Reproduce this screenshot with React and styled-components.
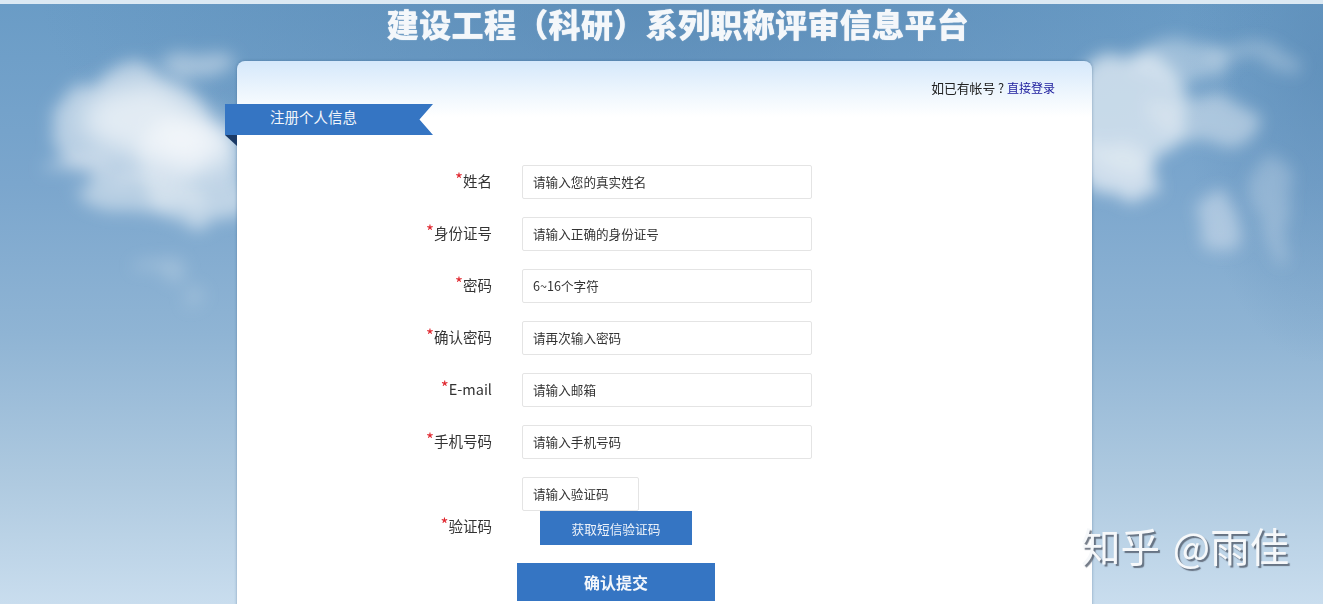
import React from 'react'
import styled, { createGlobalStyle } from 'styled-components'

const FONT = `"Noto Sans CJK SC", "Liberation Sans", sans-serif`

const GlobalStyle = createGlobalStyle`
  html, body {
    margin: 0;
    padding: 0;
    overflow: hidden;
  }
  body {
    font-family: ${FONT};
    color: #333;
  }
`

const fields = [
  { name: 'name', label: '姓名', hint: '请输入您的真实姓名' },
  { name: 'idcard', label: '身份证号', hint: '请输入正确的身份证号' },
  { name: 'password', label: '密码', hint: '6~16个字符' },
  { name: 'confirm', label: '确认密码', hint: '请再次输入密码' },
  { name: 'email', label: 'E-mail', hint: '请输入邮箱' },
  { name: 'mobile', label: '手机号码', hint: '请输入手机号码' },
]

const Clouds = () => (
  <Sky viewBox="0 0 1323 604" preserveAspectRatio="none" aria-hidden="true">
    <defs>
      <filter id="haze" x="-40%" y="-40%" width="180%" height="180%">
        <feTurbulence type="fractalNoise" baseFrequency="0.018" numOctaves="5" seed="11" />
        <feDisplacementMap in="SourceGraphic" scale="46" />
        <feGaussianBlur stdDeviation="8" />
      </filter>
      <filter id="core" x="-40%" y="-40%" width="180%" height="180%">
        <feTurbulence type="fractalNoise" baseFrequency="0.03" numOctaves="4" seed="5" />
        <feDisplacementMap in="SourceGraphic" scale="30" />
        <feGaussianBlur stdDeviation="13" />
      </filter>
    </defs>
    {/* left cloud */}
    <g filter="url(#haze)" fill="#dfe9f2">
      <ellipse cx="130" cy="128" rx="80" ry="56" opacity="0.62" />
      <ellipse cx="195" cy="175" rx="52" ry="50" opacity="0.68" />
      <ellipse cx="140" cy="195" rx="60" ry="20" opacity="0.6" />
      <ellipse cx="75" cy="165" rx="36" ry="9" opacity="0.45" />
      <ellipse cx="200" cy="64" rx="38" ry="12" opacity="0.5" />
      <ellipse cx="160" cy="268" rx="26" ry="9" opacity="0.28" />
      <ellipse cx="192" cy="296" rx="14" ry="9" opacity="0.2" />
    </g>
    <g filter="url(#core)" fill="#f5f8fb">
      <ellipse cx="140" cy="118" rx="56" ry="36" opacity="0.7" />
      <ellipse cx="195" cy="145" rx="42" ry="28" opacity="0.8" />
    </g>
    {/* right cloud */}
    <g filter="url(#haze)" fill="#dde8f1">
      <ellipse cx="1130" cy="110" rx="56" ry="62" opacity="0.8" />
      <ellipse cx="1112" cy="165" rx="38" ry="22" opacity="0.85" />
      <ellipse cx="1180" cy="62" rx="52" ry="22" opacity="0.45" />
      <ellipse cx="1205" cy="118" rx="52" ry="22" opacity="0.55" />
      <ellipse cx="1250" cy="56" rx="42" ry="12" opacity="0.34" />
      <ellipse cx="1218" cy="222" rx="24" ry="30" opacity="0.5" />
      <ellipse cx="1276" cy="208" rx="20" ry="50" opacity="0.3" />
    </g>
  </Sky>
)

const App = () => {
  return (
    <Page>
      <GlobalStyle />
      <Clouds />
      <Content>
        <Title>建设工程（科研）系列职称评审信息平台</Title>
        <Card>
          <LoginHint>
            如已有帐号 ? <LoginLink href="#">直接登录</LoginLink>
          </LoginHint>
          <RibbonWrap>
            <Ribbon>注册个人信息</Ribbon>
          </RibbonWrap>
          <Form>
            {fields.map((f) => (
              <Row key={f.name}>
                <Label>
                  <Star>*</Star>
                  {f.label}
                </Label>
                <Input placeholder={f.hint} />
              </Row>
            ))}
            <CodeRow>
              <Label>
                <Star>*</Star>验证码
              </Label>
              <CodeField>
                <Input $short placeholder="请输入验证码" />
                <SmsButton type="button">获取短信验证码</SmsButton>
              </CodeField>
            </CodeRow>
            <Submit type="button">确认提交</Submit>
          </Form>
        </Card>
      </Content>
      <Watermark>知乎 @雨佳</Watermark>
    </Page>
  )
}

const Page = styled.div`
  position: relative;
  height: 604px;
  overflow: hidden;
  border-top: 4px solid #dce9f3;
  box-sizing: border-box;
  background:
    radial-gradient(ellipse 620px 240px at 660px 0, rgba(84, 132, 176, 0.6), rgba(84, 132, 176, 0)),
    radial-gradient(ellipse 140px 300px at 1323px 60px, rgba(84, 132, 176, 0.5), rgba(84, 132, 176, 0)),
    linear-gradient(to bottom, #6a9cc6 0%, #7ba6cd 30%, #8fb4d4 55%, #afcae0 80%, #c9ddee 100%);
`

const Sky = styled.svg`
  position: absolute;
  top: -4px;
  left: 0;
  width: 1323px;
  height: 604px;
`

const Content = styled.div`
  position: relative;
  width: 855px;
  margin-left: 237px;
`

const Title = styled.h1`
  margin: 0;
  height: 57px;
  padding-left: 27px;
  font-size: 32px;
  line-height: 38px;
  letter-spacing: 0.35px;
  font-weight: 900;
  text-align: center;
  white-space: nowrap;
  color: #f4f7fa;
  text-shadow: 0 0 1px #f4f7fa;
`

const Card = styled.div`
  height: 560px;
  border-radius: 8px 8px 0 0;
  background: linear-gradient(to bottom, #d5e8fb 0, #eef6fd 32px, #ffffff 56px);
  box-shadow: 0 0 3px rgba(40, 80, 120, 0.45);
`

const LoginHint = styled.div`
  height: 43px;
  box-sizing: border-box;
  padding: 18px 37px 0 0;
  font-size: 12.8px;
  line-height: 18px;
  text-align: right;
  color: #222;
`

const LoginLink = styled.a`
  color: #1a1a9c;
  font-size: 12px;
  text-decoration: none;
`

const RibbonWrap = styled.div`
  position: relative;
  width: 208px;
  height: 31px;
  margin-left: -12px;
  &::after {
    content: '';
    position: absolute;
    left: 0;
    top: 31px;
    border-top: 11px solid #1b3a66;
    border-left: 12px solid transparent;
  }
`

const Ribbon = styled.div`
  height: 31px;
  box-sizing: border-box;
  padding-left: 45px;
  font-size: 14.5px;
  line-height: 26px;
  color: #f2f6fb;
  background: #3575c3;
  clip-path: polygon(0 0, 100% 0, 93.5% 50%, 100% 100%, 0 100%);
`

const Form = styled.form`
  margin-top: 30px;
`

const Row = styled.div`
  display: flex;
  align-items: center;
  gap: 30px;
  height: 34px;
  margin-bottom: 18px;
`

const CodeRow = styled(Row)`
  height: 68px;
  align-items: flex-end;
`

const Label = styled.label`
  position: relative;
  top: -2px;
  width: 255px;
  flex-shrink: 0;
  font-size: 14.5px;
  line-height: 34px;
  text-align: right;
  color: #333;
`

const Star = styled.span`
  position: relative;
  top: -1px;
  font-size: 17px;
  color: #e0262e;
`

const Input = styled.input`
  width: ${(p) => (p.$short ? '117px' : '290px')};
  height: 34px;
  box-sizing: border-box;
  padding: 0 10px 2px;
  border: 1px solid #e4e4e4;
  border-radius: 2px;
  background: #fff;
  font-family: ${FONT};
  font-size: 12.6px;
  color: #333;
  outline: none;
  &::placeholder {
    color: #333;
    opacity: 1;
  }
`

const CodeField = styled.div`
  display: flex;
  flex-direction: column;
  align-items: flex-start;
`

const SmsButton = styled.button`
  width: 152px;
  height: 34px;
  margin-left: 18px;
  padding: 0;
  border: 0;
  background: #3575c3;
  color: #eef3fa;
  font-family: ${FONT};
  font-size: 12.7px;
`

const Submit = styled.button`
  display: block;
  width: 198px;
  height: 38px;
  margin-left: 280px;
  padding: 0;
  border: 0;
  background: #3575c3;
  color: #f4f7fb;
  font-family: ${FONT};
  font-size: 16px;
  font-weight: 700;
`

const Watermark = styled.div`
  position: absolute;
  left: 1081px;
  top: 518px;
  font-size: 39.5px;
  line-height: 46px;
  word-spacing: 4px;
  white-space: nowrap;
  color: #f6f8fa;
  text-shadow: 2px 2px 1px rgba(80, 90, 105, 0.8);
`

export default App
